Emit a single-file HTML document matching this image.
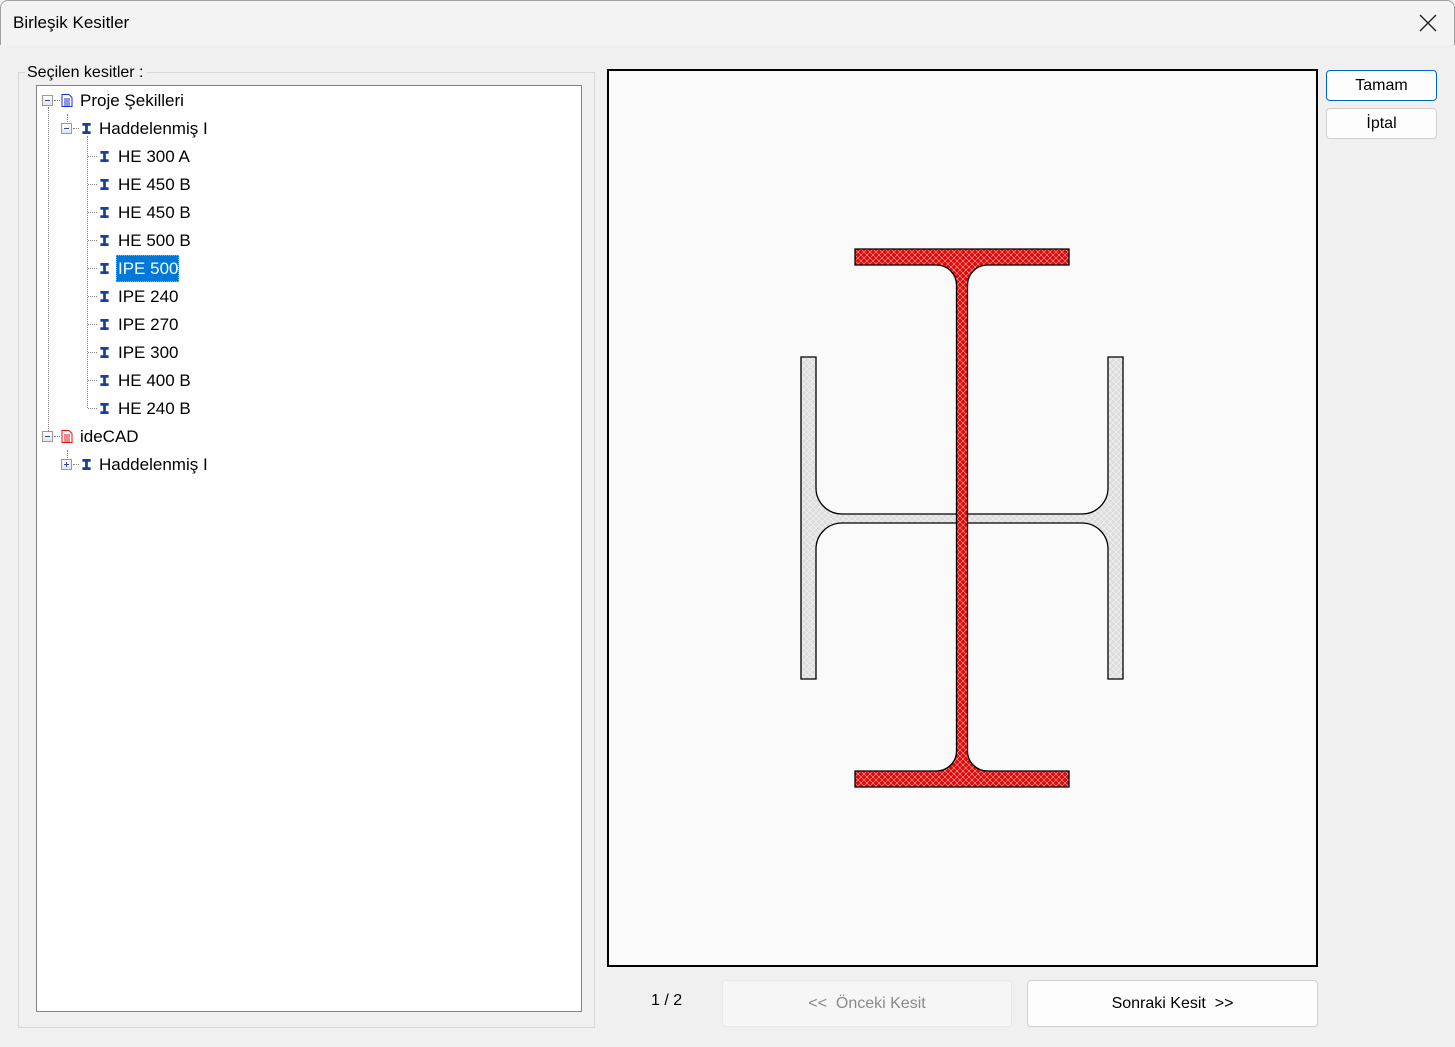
<!DOCTYPE html>
<html><head><meta charset="utf-8"><style>
*{margin:0;padding:0;box-sizing:border-box}
body{width:1455px;height:1047px;background:#f0f0f0;font-family:"Liberation Sans",sans-serif;position:relative;overflow:hidden;color:#000}
.a{position:absolute}
.title{left:0;top:0;width:1455px;height:45px;background:#f3f3f3;border:1px solid #a0a0a0;border-bottom:none;border-radius:8px 8px 0 0}
.t{font-size:17px;white-space:nowrap}
.row{position:absolute;font-size:17px;line-height:20px;white-space:nowrap}
.btn{position:absolute;background:#fdfdfd;border:1px solid #d0d0d0;border-radius:4px;text-align:center;font-size:16px}
.dv{position:absolute;border-left:1px dotted #808080;width:0}
.dh{position:absolute;border-top:1px dotted #808080;height:0}
.pm{position:absolute;width:11px;height:11px;border:1px solid #9a9a9a;background:linear-gradient(#fff,#e4e4e4)}
.pm:after{content:"";position:absolute;left:2px;top:4px;width:5px;height:1px;background:#2b4aa0}
.pm.p:before{content:"";position:absolute;left:4px;top:2px;width:1px;height:5px;background:#2b4aa0}
</style></head><body>
<div class="a title"></div>
<div class="a t" style="left:13px;top:13px">Birleşik Kesitler</div>
<svg class="a" style="left:1418px;top:13px" width="20" height="20"><path d="M2 2L18 18M18 2L2 18" stroke="#222" stroke-width="1.4"/></svg>

<div class="a" style="left:18px;top:72px;width:577px;height:956px;border:1px solid #d8d8d8"></div>
<div class="a t" style="left:25px;top:64px;background:#f0f0f0;padding:0 3px 0 2px;font-size:16px">Seçilen kesitler :</div>
<div class="a" style="left:36px;top:85px;width:546px;height:927px;background:#fff;border:1px solid #828282"></div>

<div class="dv" style="left:48px;top:107px;height:330px"></div>
<div class="dv" style="left:67px;top:114px;height:8px"></div>
<div class="dv" style="left:87px;top:136px;height:272px"></div>
<div class="dh" style="left:54px;top:100px;width:6px"></div>
<div class="dh" style="left:73px;top:128px;width:6px"></div>
<div class="dh" style="left:54px;top:436px;width:6px"></div>
<div class="dv" style="left:67px;top:450px;height:8px"></div>
<div class="dh" style="left:73px;top:464px;width:6px"></div>
<div class="dh" style="left:88px;top:156px;width:9px"></div>
<div class="dh" style="left:88px;top:184px;width:9px"></div>
<div class="dh" style="left:88px;top:212px;width:9px"></div>
<div class="dh" style="left:88px;top:240px;width:9px"></div>
<div class="dh" style="left:88px;top:268px;width:9px"></div>
<div class="dh" style="left:88px;top:296px;width:9px"></div>
<div class="dh" style="left:88px;top:324px;width:9px"></div>
<div class="dh" style="left:88px;top:352px;width:9px"></div>
<div class="dh" style="left:88px;top:380px;width:9px"></div>
<div class="dh" style="left:88px;top:408px;width:9px"></div>

<div class="pm" style="left:42px;top:95px"></div>
<div class="pm" style="left:61px;top:123px"></div>
<div class="pm" style="left:42px;top:431px"></div>
<div class="pm p" style="left:61px;top:459px"></div>

<svg class="a" style="left:0;top:0" width="600" height="480">
<defs><symbol id="I" viewBox="0 0 9 12"><path d="M0 0H9V3H6V9H9V12H0V9H3V3H0Z" fill="#1440a0"/></symbol>
<symbol id="D" viewBox="0 0 12 13"><path d="M1 .5H8L11 3.5V12.5H1Z" fill="#fff" stroke="currentColor"/><path d="M3 5H9M3 7H9M3 9H9M3 11H9" stroke="currentColor"/></symbol></defs>
<use href="#D" x="61" y="94" width="12" height="13" style="color:#1a2fd0"/>
<use href="#D" x="61" y="430" width="12" height="13" style="color:#e01010"/>
<use href="#I" x="82" y="123" width="9" height="11"/>
<use href="#I" x="82" y="459" width="9" height="11"/>
<use href="#I" x="100" y="151" width="9" height="11"/>
<use href="#I" x="100" y="179" width="9" height="11"/>
<use href="#I" x="100" y="207" width="9" height="11"/>
<use href="#I" x="100" y="235" width="9" height="11"/>
<use href="#I" x="100" y="263" width="9" height="11"/>
<use href="#I" x="100" y="291" width="9" height="11"/>
<use href="#I" x="100" y="319" width="9" height="11"/>
<use href="#I" x="100" y="347" width="9" height="11"/>
<use href="#I" x="100" y="375" width="9" height="11"/>
<use href="#I" x="100" y="403" width="9" height="11"/>
</svg>

<div class="a" style="left:116px;top:255px;width:63px;height:27px;background:#0078d7;border:1px dotted #f0a030"></div>
<div class="row" style="left:80px;top:91px">Proje Şekilleri</div>
<div class="row" style="left:99px;top:119px">Haddelenmiş I</div>
<div class="row" style="left:118px;top:147px">HE 300 A</div>
<div class="row" style="left:118px;top:175px">HE 450 B</div>
<div class="row" style="left:118px;top:203px">HE 450 B</div>
<div class="row" style="left:118px;top:231px">HE 500 B</div>
<div class="row" style="left:118px;top:259px;color:#fff">IPE 500</div>
<div class="row" style="left:118px;top:287px">IPE 240</div>
<div class="row" style="left:118px;top:315px">IPE 270</div>
<div class="row" style="left:118px;top:343px">IPE 300</div>
<div class="row" style="left:118px;top:371px">HE 400 B</div>
<div class="row" style="left:118px;top:399px">HE 240 B</div>
<div class="row" style="left:80px;top:427px">ideCAD</div>
<div class="row" style="left:99px;top:455px">Haddelenmiş I</div>

<div class="a" style="left:607px;top:69px;width:711px;height:898px;background:#fafafa;border:2px solid #000"></div>
<svg class="a" style="left:0;top:0" width="1455" height="1047">
<defs>
<pattern id="pr" width="6" height="6" patternUnits="userSpaceOnUse"><rect width="6" height="6" fill="#e00a0a"/><path d="M0 0L6 6M6 0L0 6" stroke="#f6b0b0" stroke-width=".6"/></pattern>
<pattern id="pg" width="6" height="6" patternUnits="userSpaceOnUse"><rect width="6" height="6" fill="#dcdcdc"/><path d="M0 0L6 6M6 0L0 6" stroke="#f4f4f4" stroke-width=".7"/></pattern>
</defs>
<path d="M801 357H816V488A26 26 0 0 0 842 514H1082A26 26 0 0 0 1108 488V357H1123V679H1108V549A26 26 0 0 0 1082 523H842A26 26 0 0 0 816 549V679H801Z" fill="url(#pg)" stroke="#000" stroke-width="1.3"/>
<path d="M855 249H1069V265H987.5A20 20 0 0 0 967.5 285V751A20 20 0 0 0 987.5 771H1069V787H855V771H936.5A20 20 0 0 0 956.5 751V285A20 20 0 0 0 936.5 265H855Z" fill="url(#pr)" stroke="#000" stroke-width="1.3"/>
</svg>

<div class="btn" style="left:1326px;top:70px;width:111px;height:31px;border:1px solid #0067c0;line-height:30px">Tamam</div>
<div class="btn" style="left:1326px;top:108px;width:111px;height:31px;line-height:30px">İptal</div>

<div class="a t" style="left:651px;top:992px;font-size:16px">1 / 2</div>
<div class="btn" style="left:722px;top:980px;width:290px;height:47px;line-height:46px;background:#f6f6f6;border-color:#e8e8e8;color:#8a8a8a">&lt;&lt;&nbsp; Önceki Kesit</div>
<div class="btn" style="left:1027px;top:980px;width:291px;height:47px;line-height:46px">Sonraki Kesit &nbsp;&gt;&gt;</div>
</body></html>
